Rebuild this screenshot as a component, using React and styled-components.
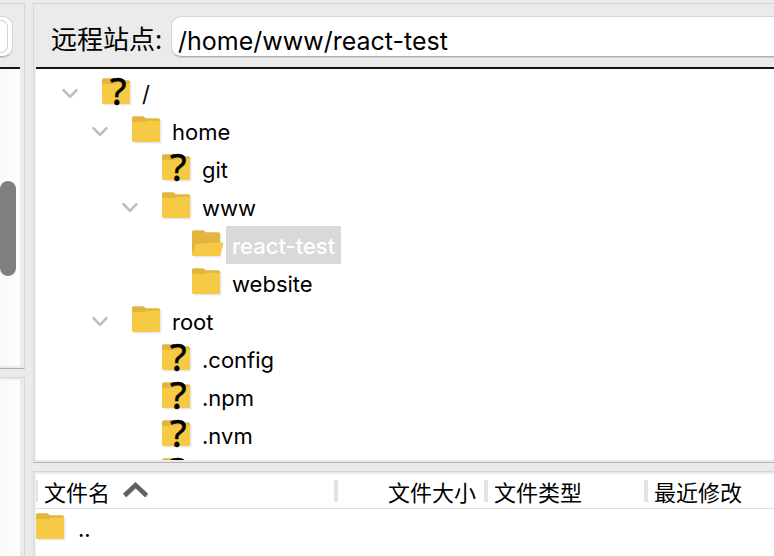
import React from "react";
import styled, { createGlobalStyle } from "styled-components";

const GlobalStyle = createGlobalStyle`
  *, *::before, *::after { box-sizing: border-box; }
  body {
    margin: 0;
    background: #ebebeb;
    color: #000;
    font-family: Inter, "Noto Sans CJK SC", sans-serif;
    font-size: 22px;
  }
  button, input { font: inherit; color: inherit; }
`;

const Window = styled.div`
  display: grid;
  grid-template-columns: 25px minmax(0, 1fr);
  grid-template-rows: minmax(0, 1fr);
  column-gap: 8px;
  height: 100vh;
  padding-top: 3px;
  overflow: hidden;
`;

const Column = styled.div`
  display: grid;
  grid-template-rows: minmax(0, ${(p) => p.$top}fr) minmax(0, ${(p) => p.$bottom}fr);
  row-gap: 8px;
  min-width: 0;
`;

const Pane = styled.section`
  display: flex;
  flex-direction: column;
  min-width: 0;
  min-height: 0;
  overflow: hidden;
  border-style: solid;
  border-color: #d6d6d6;
  border-width: ${(p) => (p.$side === "left" ? "1px 1px 0 0" : "1px 0 0 1px")};
  ${(p) => p.$closed && "border-bottom: 1px solid #b2b2b2;"}
  padding: ${(p) => (p.$headed ? "0" : "2px")} ${(p) => (p.$side === "left" ? "4px" : "0")}
    ${(p) => (p.$closed ? "2px" : "0")} ${(p) => (p.$side === "left" ? "0" : "2px")};
`;

const SiteBar = styled.div`
  flex: none;
  display: flex;
  align-items: center;
  height: 65px;
  padding-top: 2px;
  padding-left: ${(p) => (p.$stub ? "0" : "15px")};
  border-bottom: 2px solid #151515;
`;

const SiteLabel = styled.label`
  flex: none;
  width: 120px;
  padding-top: 2px;
  font-family: "Noto Sans CJK SC", sans-serif;
  font-size: 26px;
  line-height: 40px;
  white-space: nowrap;
`;

const PathInput = styled.input`
  flex: 1;
  min-width: 0;
  height: 41px;
  margin: 0;
  padding: 9px 0 0 6px;
  border: 1px solid #d6d6d6;
  border-right: 0;
  border-bottom-color: #b0b0b0;
  border-radius: 10px 0 0 10px;
  background: #fff;
  box-shadow: 0 1px 0 #d0d0d0;
  font-size: 25px;
  outline: none;
`;

const LocalPicker = styled.button`
  width: 13px;
  height: 41px;
  padding: 3px 4px 3px 0;
  border: 1px solid #d6d6d6;
  border-left: 0;
  border-bottom-color: #b0b0b0;
  border-radius: 0 10px 10px 0;
  background: #fff;
  box-shadow: 0 1px 0 #d0d0d0;

  &::before {
    content: "";
    display: block;
    height: 100%;
    border: 1px solid #d2d2d2;
    border-left: 0;
    border-radius: 0 7px 7px 0;
  }
`;

const LocalView = styled.div`
  flex: 1;
  display: grid;
  grid-template-rows: 112fr 94fr 90fr;
  min-height: 0;
  background: linear-gradient(90deg, #f8f8f8, #fdfdfd);
`;

const ScrollThumb = styled.div`
  grid-row: 2;
  width: 16px;
  border-radius: 8px;
  background: #7f7f7f;
`;

const Tree = styled.ul`
  flex: 1;
  min-height: 0;
  margin: 0;
  padding: 5px 0 0;
  overflow: hidden;
  list-style: none;
  background: #fff;
`;

const TreeRow = styled.li`
  display: flex;
  align-items: center;
  height: 38px;
  padding-left: ${(p) => 26 + p.$level * 30}px;
`;

const Toggle = styled.button`
  display: flex;
  align-items: center;
  width: 40px;
  height: 36px;
  padding: 2px 0 0;
  border: 0;
  background: none;
`;

const ToggleSpace = styled.span`
  width: 40px;
`;

const Icon = styled.svg`
  display: block;
  flex: none;
  overflow: visible;
`;

const NodeName = styled.span`
  height: 38px;
  padding: 1px 6px 0;
  line-height: 38px;
  white-space: nowrap;
  color: ${(p) => (p.$selected ? "#fff" : "#000")};
  background: ${(p) => (p.$selected ? "#d9d9d9" : "transparent")};
  font-weight: ${(p) => (p.$selected ? 500 : 400)};
`;

const Mark = styled.text`
  font-family: "Noto Sans", sans-serif;
  font-size: 38px;
  font-weight: 400;
`;

const FileTable = styled.table`
  flex: none;
  width: 100%;
  table-layout: fixed;
  border-collapse: collapse;
`;

const FileArea = styled.div`
  flex: 1;
  min-height: 0;
  background: #fff;
`;

const HeadCell = styled.th`
  width: ${(p) => p.$width || "auto"};
  height: 34px;
  padding: 0;
  border-bottom: 1px solid #dfdfdf;
  font-weight: 400;
`;

const SortButton = styled.button`
  display: flex;
  align-items: center;
  justify-content: ${(p) => (p.$end ? "flex-end" : "flex-start")};
  gap: 12px;
  width: 100%;
  height: 22px;
  padding: 0 ${(p) => (p.$end ? "8px" : "0")} 0 6px;
  border: 0;
  border-left: ${(p) => (p.$first ? "2px solid #e3e3e3" : "0")};
  border-right: ${(p) => (p.$last ? "0" : "4px solid #e3e3e3")};
  background: none;
  font-family: "Noto Sans CJK SC", sans-serif;
  line-height: 22px;
  white-space: nowrap;
`;

const FileCell = styled.td`
  height: 40px;
  padding: 0;
`;

const FileName = styled.div`
  display: flex;
  align-items: center;
  gap: 2px;
`;

function Chevron() {
  return (
    <Icon width="16" height="12" viewBox="0 0 16 12" fill="none" aria-hidden="true">
      <path d="M1.5 2.2 8 8.8l6.5-6.6" stroke="#bdbdbd" strokeWidth="2.6" strokeLinecap="round" strokeLinejoin="round" />
    </Icon>
  );
}

function SortArrow() {
  return (
    <Icon width="28" height="20" viewBox="0 0 28 20" fill="none" aria-hidden="true">
      <path d="M3.5 15.5 14.5 5l11 10.5" stroke="#dedede" strokeWidth="4" />
      <path d="M2.5 14.5 13.5 4l11 10.5" stroke="#606060" strokeWidth="4.5" />
    </Icon>
  );
}

function Folder({ kind }) {
  return (
    <Icon width="34" height="34" viewBox="0 0 34 34" aria-hidden="true">
      <path d="M2 6h26.5q1 0 1 1v21q0 1.500-1.500 1.500H3q-1 0-1-1z" fill="#e9e9e9" />
      <path d="M0 4q0-1.700 1.700-1.700h9q1 0 1.700.7l1.200 1.200h12.800q1.600 0 1.600 1.600V26H0z" fill="#e2b53f" />
      {kind === "open" ? (
        <path d="M5.600 15.800 16 15.200l3-.7h11.600q1.200 0 .8 1.100L28.300 27q-.4 1-1.300 1H1.200Q0 28 0 27l3.800-10q.5-1.200 1.800-1.200z" fill="#f7ca45" />
      ) : (
        <path d="M0 8h11.500q1.500 0 2.600-.7l1-.6h11.500q1.400 0 1.400 1.400V26.500q0 1.500-1.500 1.500h-25Q0 28 0 26.500z" fill="#f7ca45" />
      )}
      {kind === "unknown" && <Mark x="8" y="29" stroke="#000" strokeWidth="0.6">?</Mark>}
    </Icon>
  );
}

const nodes = [
  { name: "/", level: 0, kind: "unknown", open: true },
  { name: "home", level: 1, open: true },
  { name: "git", level: 2, kind: "unknown" },
  { name: "www", level: 2, open: true },
  { name: "react-test", level: 3, kind: "open", selected: true },
  { name: "website", level: 3 },
  { name: "root", level: 1, open: true },
  { name: ".config", level: 2, kind: "unknown" },
  { name: ".npm", level: 2, kind: "unknown" },
  { name: ".nvm", level: 2, kind: "unknown" },
  { name: "", level: 2, kind: "unknown" },
];

export default function App() {
  return (
    <>
      <GlobalStyle />
      <Window>
        <Column $top={366} $bottom={179}>
          <Pane $side="left" $headed $closed>
            <SiteBar $stub>
              <LocalPicker type="button" aria-label="本地站点" />
            </SiteBar>
            <LocalView>
              <ScrollThumb />
            </LocalView>
          </Pane>
          <Pane $side="left">
            <LocalView />
          </Pane>
        </Column>
        <Column $top={460} $bottom={85}>
          <Pane $side="right" $headed $closed>
            <SiteBar>
              <SiteLabel htmlFor="remote-path">远程站点:</SiteLabel>
              <PathInput id="remote-path" type="text" defaultValue="/home/www/react-test" />
            </SiteBar>
            <Tree>
              {nodes.map((n, i) => (
                <TreeRow key={i} $level={n.level}>
                  {n.open ? (
                    <Toggle type="button" aria-label={n.name} aria-expanded="true">
                      <Chevron />
                    </Toggle>
                  ) : (
                    <ToggleSpace />
                  )}
                  <Folder kind={n.kind} />
                  {n.name && <NodeName $selected={n.selected}>{n.name}</NodeName>}
                </TreeRow>
              ))}
            </Tree>
          </Pane>
          <Pane $side="right">
            <FileArea>
              <FileTable>
                <thead>
                  <tr>
                    <HeadCell $width="302px" aria-sort="ascending">
                      <SortButton type="button" $first>
                        文件名
                        <SortArrow />
                      </SortButton>
                    </HeadCell>
                    <HeadCell $width="150px">
                      <SortButton type="button" $end>文件大小</SortButton>
                    </HeadCell>
                    <HeadCell $width="160px">
                      <SortButton type="button">文件类型</SortButton>
                    </HeadCell>
                    <HeadCell>
                      <SortButton type="button" $last>最近修改</SortButton>
                    </HeadCell>
                  </tr>
                </thead>
                <tbody>
                  <tr>
                    <FileCell colSpan={4}>
                      <FileName>
                        <Folder />
                        <NodeName>..</NodeName>
                      </FileName>
                    </FileCell>
                  </tr>
                </tbody>
              </FileTable>
            </FileArea>
          </Pane>
        </Column>
      </Window>
    </>
  );
}
